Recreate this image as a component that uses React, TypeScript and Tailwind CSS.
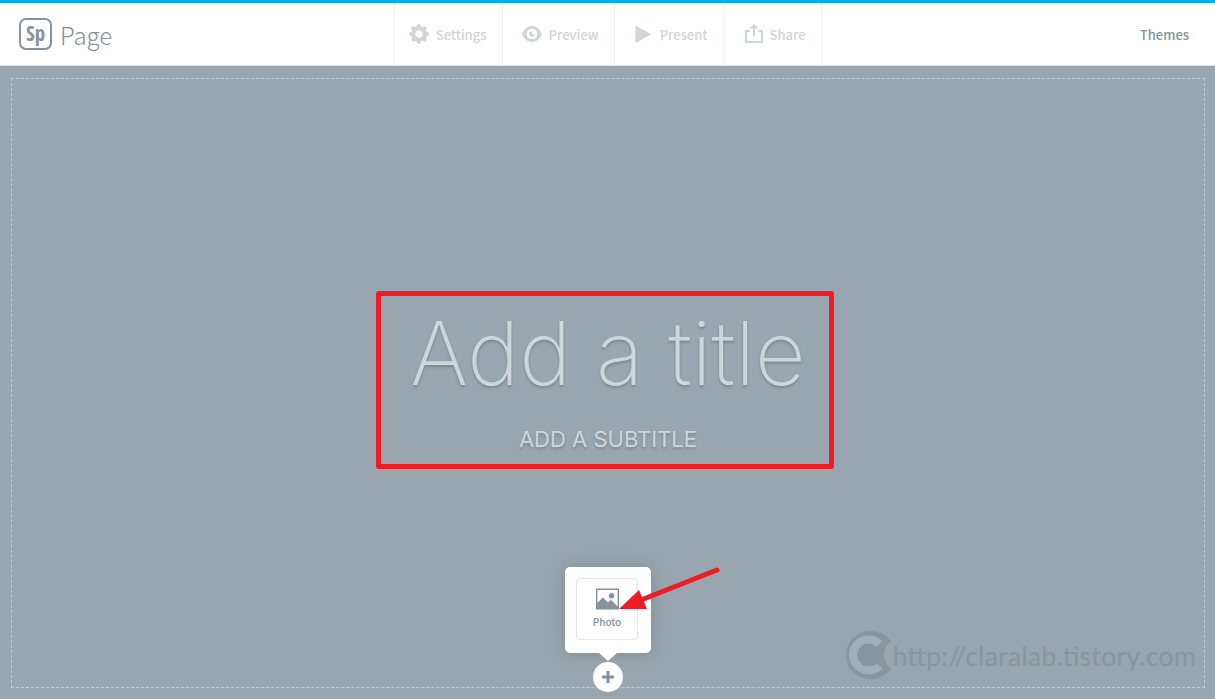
import type { ReactNode } from "react";

interface NavItemProps {
  label: string;
  className: string;
  children: ReactNode;
}

function NavItem({ label, className, children }: NavItemProps) {
  return (
    <button
      type="button"
      className={`flex items-center justify-end gap-[7px] border-r border-[#eff1f2] pr-[15px] text-[#cfd5d9] ${className}`}
    >
      {children}
      <span className="pt-0.5 text-[13px] leading-5 font-medium">{label}</span>
    </button>
  );
}

function GearIcon() {
  return (
    <svg width="20" height="20" viewBox="0 0 20 20" fill="currentColor" aria-hidden="true">
      <circle cx="10" cy="10" r="5.800" fill="none" stroke="currentColor" strokeWidth="4.200" />
      <g stroke="currentColor" strokeWidth="4" strokeLinecap="round">
        <path d="M10 2v1M10 17v1M2 10h1M17 10h1M4.300 4.300l.7.7M15 15l.7.7M4.300 15.700l.7-.7M15 5l.7-.7" />
      </g>
    </svg>
  );
}

function EyeIcon() {
  return (
    <svg width="20" height="16" viewBox="0 0 20 16" fill="currentColor" aria-hidden="true">
      <path
        fillRule="evenodd"
        d="M10 0c4.500 0 8 3.200 10 8-2 4.800-5.500 8-10 8S2 12.800 0 8c2-4.800 5.500-8 10-8zm0 2.800a5.200 5.200 0 1 0 0 10.400 5.200 5.200 0 0 0 0-10.400z"
      />
      <path d="M10 5.200a2.800 2.800 0 1 0 2.800 2.800H10z" />
    </svg>
  );
}

function PlayIcon() {
  return (
    <svg className="mr-0.5" width="16" height="17" viewBox="0 0 16 17" fill="currentColor" aria-hidden="true">
      <path d="M.3 0h1.200L16 8.300 1.500 16.600H.3z" />
    </svg>
  );
}

function ShareIcon() {
  return (
    <svg width="18" height="20" viewBox="0 0 18 20" fill="none" stroke="currentColor" strokeWidth="2" aria-hidden="true">
      <path d="M5 7H1v11h16V7h-4" />
      <path d="M9 12V3" />
      <path d="M9 0l4.500 4.500h-9z" fill="currentColor" stroke="none" />
    </svg>
  );
}

function PhotoIcon() {
  return (
    <svg width="23" height="22" viewBox="0 0 24 22" fill="#84939e" aria-hidden="true">
      <path fillRule="evenodd" d="M0 0h24v22H0zM1.500 1.500v13.600L7 9.300l5.400 5.400 3.100-2.900 7 7V1.500z" />
      <circle cx="16.300" cy="7.600" r="2.800" />
    </svg>
  );
}

function Header() {
  return (
    <header className="grid h-[66px] grid-cols-[1fr_auto_1fr] border-t-3 border-b border-t-[#00aeef] border-b-[#dfe5e9] bg-white">
      <a href="#home" className="flex items-center gap-2 pl-[19px] text-[#84939e]">
        <span className="flex h-8 w-[33px] items-center justify-center rounded-[7px] border-2 border-[#84939e] pb-0.5 font-['Open_Sans_Condensed','Open_Sans',sans-serif] text-[21px] leading-5 font-semibold">
          Sp
        </span>
        <span className="pt-0.5 text-[24px] leading-8 font-light">Page</span>
      </a>

      <nav className="flex border-l border-[#eff1f2]">
        <NavItem label="Settings" className="w-[108px]">
          <GearIcon />
        </NavItem>
        <NavItem label="Preview" className="w-[112px]">
          <EyeIcon />
        </NavItem>
        <NavItem label="Present" className="w-[109px]">
          <PlayIcon />
        </NavItem>
        <NavItem label="Share" className="w-[98px]">
          <ShareIcon />
        </NavItem>
      </nav>

      <button type="button" className="justify-self-end pt-0.5 pr-[26px] text-[13px] leading-5 font-medium text-[#84939e]">
        Themes
      </button>
    </header>
  );
}

function TitleFields() {
  return (
    <div className="relative mb-2 w-full max-w-[452px] text-center">
      <input
        type="text"
        aria-label="Title"
        placeholder="Add a title"
        className="block h-27 w-full bg-transparent text-center font-['Inter',sans-serif] text-[88px] font-extralight outline-none [text-shadow:0_2px_3px_rgba(0,0,0,0.2)] placeholder:text-[#ced6da]"
      />
      <input
        type="text"
        aria-label="Subtitle"
        placeholder="ADD A SUBTITLE"
        className="mt-3 block h-10 w-full bg-transparent text-center font-['Inter',sans-serif] text-[22px] font-normal outline-none [text-shadow:0_2px_3px_rgba(0,0,0,0.2)] placeholder:text-[#ced6da]"
      />
      {/* Highlight */}
      <div className="pointer-events-none absolute -top-2 right-0 -bottom-2.5 -left-1.5 rounded-[3px] border-5 border-[#ee1c25]" />
    </div>
  );
}

function AddMenu() {
  return (
    <div className="absolute -bottom-[5px] left-1/2 flex -translate-x-1/2 flex-col items-center">
      <div className="relative rounded-[5px] bg-white pt-[11px] pr-[13px] pb-[13px] pl-[11px] shadow-[0_0_16px_rgba(70,85,95,0.35)]">
        <button
          type="button"
          className="flex h-[62px] w-[62px] flex-col items-center justify-center gap-1 rounded-[4px] border border-[#e3e7ea] text-[#84939e]"
        >
          <PhotoIcon />
          <span className="text-[10px] leading-4 font-medium">Photo</span>
        </button>
        <svg
          className="pointer-events-none absolute top-0 left-[54px]"
          width="102"
          height="44"
          viewBox="0 0 102 44"
          fill="#ee1c25"
          aria-hidden="true"
        >
          <path d="M98 3L22 33" stroke="#ee1c25" strokeWidth="5" strokeLinecap="round" />
          <path d="M0 42L20 23l8 19z" />
        </svg>
      </div>
      <svg className="relative" width="18" height="9" viewBox="0 0 18 9" fill="#fff" aria-hidden="true">
        <path d="M0 0h18L9 8z" />
      </svg>
      <button
        type="button"
        aria-label="Add"
        className="relative flex h-[30px] w-[30px] items-center justify-center rounded-full bg-white text-[#84939e]"
      >
        <svg width="12" height="12" viewBox="0 0 12 12" stroke="currentColor" strokeWidth="3" aria-hidden="true">
          <path d="M6 0v12M0 6h12" />
        </svg>
      </button>
    </div>
  );
}

function Watermark() {
  return (
    <div className="absolute right-2 bottom-2 flex items-center text-[#8a969f]">
      <svg width="49" height="48" viewBox="0 0 49 48" aria-hidden="true">
        <path d="M48 10A25 24 0 1 0 48 38C39 31 39 17 48 10z" fill="#8a969f" />
        <path d="M36.500 13A15.500 15.500 0 1 0 36.500 35" fill="none" stroke="#a3afb8" strokeWidth="8" />
      </svg>
      <span className="pt-0.5 font-['Lato',sans-serif] text-[27px] leading-8 font-medium">
        http://claralab.tistory.com
      </span>
    </div>
  );
}

export default function App() {
  return (
    <div className="flex min-h-screen flex-col bg-[#9aa6af] font-['Noto_Sans_CJK_KR',sans-serif]">
      <Header />
      <main className="flex flex-1 flex-col pt-3 pr-[10px] pb-[11px] pl-[11px]">
        <section className="relative flex flex-1 flex-col items-center justify-center border border-dashed border-[#c3cbd1]">
          <TitleFields />
          <AddMenu />
          <Watermark />
        </section>
      </main>
    </div>
  );
}
